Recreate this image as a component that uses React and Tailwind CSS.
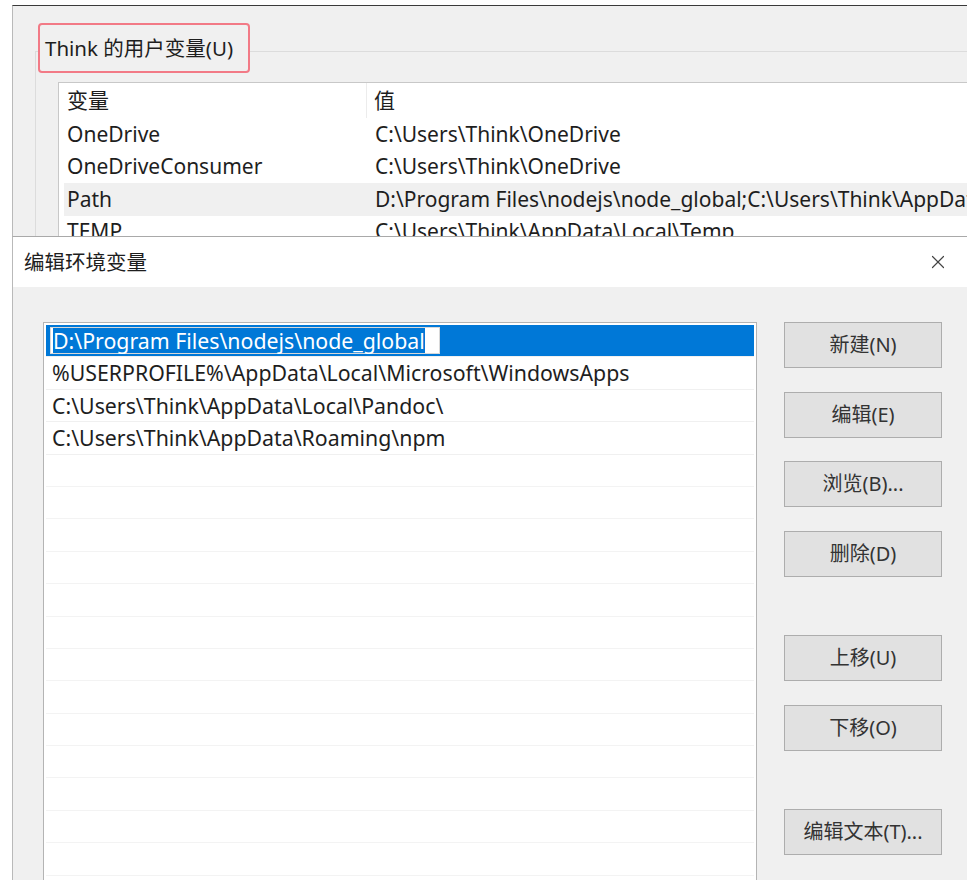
import React from 'react';
import { X } from 'lucide-react';

const font = { fontFamily: '"Noto Sans", "Noto Sans CJK SC", sans-serif' };

const userVars = [
    { name: 'OneDrive', value: 'C:\\Users\\Think\\OneDrive' },
    { name: 'OneDriveConsumer', value: 'C:\\Users\\Think\\OneDrive' },
    { name: 'Path', value: 'D:\\Program Files\\nodejs\\node_global;C:\\Users\\Think\\AppData\\Local\\Microsoft\\WindowsApps', active: true },
    { name: 'TEMP', value: 'C:\\Users\\Think\\AppData\\Local\\Temp' },
];

const paths = [
    '%USERPROFILE%\\AppData\\Local\\Microsoft\\WindowsApps',
    'C:\\Users\\Think\\AppData\\Local\\Pandoc\\',
    'C:\\Users\\Think\\AppData\\Roaming\\npm',
];

const buttonGroups = [
    ['新建(N)', '编辑(E)', '浏览(B)...', '删除(D)'],
    ['上移(U)', '下移(O)'],
    ['编辑文本(T)...'],
];

const WinButton = ({ label }) => (
    <button className="w-[158px] h-[46px] bg-[#e1e1e1] border border-[#adadad] text-[20px] text-[#333] whitespace-nowrap">
        {label}
    </button>
);

export default function App() {
    return (
        <div className="w-[967px] h-[880px] bg-white overflow-hidden text-[#1e1e1e]" style={font}>
            {/* Background window: user variables */}
            <div className="ml-[12px] mt-[5px] h-[231px] overflow-hidden bg-[#f0f0f0] border-t border-t-[#3a3a3a] border-l border-l-[#b9b9b9]">
                <div className="ml-[22px] mt-[45px] border-t border-l border-[#dcdcdc] h-full">
                    <div className="-mt-[29px] ml-[2px] w-[212px] h-[50px] border-2 border-[#f27a86] rounded-[4px] bg-[#f0f0f0] flex items-center pl-[5px] text-[20.5px] whitespace-nowrap">
                        Think 的用户变量(U)
                    </div>
                    <div className="ml-[22px] mt-[9px] bg-white border-t border-l border-[#c8c8c8] h-[200px] text-[21px] whitespace-nowrap">
                        <div className="flex h-[35px] items-center">
                            <div className="w-[308px] shrink-0 pl-[8px] border-r border-[#ececec] h-full flex items-center">变量</div>
                            <div className="pl-[7px]">值</div>
                        </div>
                        {userVars.map((v) => (
                            <div
                                key={v.name}
                                className={`flex h-[32.5px] items-center ml-[5px] ${v.active ? 'bg-[#f0f0f0]' : ''}`}
                            >
                                <div className="w-[303px] shrink-0 pl-[3px]">{v.name}</div>
                                <div className="pl-[8px]">{v.value}</div>
                            </div>
                        ))}
                    </div>
                </div>
            </div>

            {/* Edit dialog */}
            <div className="ml-[12px] border-t border-t-[#a9a9a9] border-l border-l-[#b9b9b9] bg-[#f0f0f0] h-[700px]">
                <div className="h-[50px] bg-white flex items-center justify-between pl-[11px] pr-[18px]">
                    <span className="text-[20.5px]">编辑环境变量</span>
                    <X size={22} strokeWidth={1.3} className="text-[#444]" />
                </div>
                <div className="flex pl-[30px] pt-[35px] gap-[27px]">
                    <div className="w-[714px] h-[600px] bg-white border border-[#b4b4b4] p-[2px] text-[21.3px] whitespace-nowrap">
                        <div className="h-[32.4px] bg-[#0078d7] flex items-center pl-[4px] border-b border-[#f0f0f0]">
                            <div className="w-[390px] h-[27px] bg-white border border-[#d8d8d8] flex items-center pl-[2px]">
                                <span className="bg-[#0078d7] text-white leading-[25px]">D:\Program Files\nodejs\node_global</span>
                            </div>
                        </div>
                        {paths.map((p) => (
                            <div key={p} className="h-[32.4px] flex items-center pl-[6px] border-b border-[#f0f0f0]">
                                {p}
                            </div>
                        ))}
                        {Array.from({ length: 14 }).map((_, i) => (
                            <div key={i} className="h-[32.4px] border-b border-[#f3f3f3]" />
                        ))}
                    </div>
                    <div className="flex flex-col">
                        <div className="flex flex-col gap-[23.5px]">
                            {buttonGroups[0].map((b) => <WinButton key={b} label={b} />)}
                        </div>
                        <div className="flex flex-col gap-[24px] mt-[58px]">
                            {buttonGroups[1].map((b) => <WinButton key={b} label={b} />)}
                        </div>
                        <div className="mt-[58px]">
                            {buttonGroups[2].map((b) => <WinButton key={b} label={b} />)}
                        </div>
                    </div>
                </div>
            </div>
        </div>
    );
}
